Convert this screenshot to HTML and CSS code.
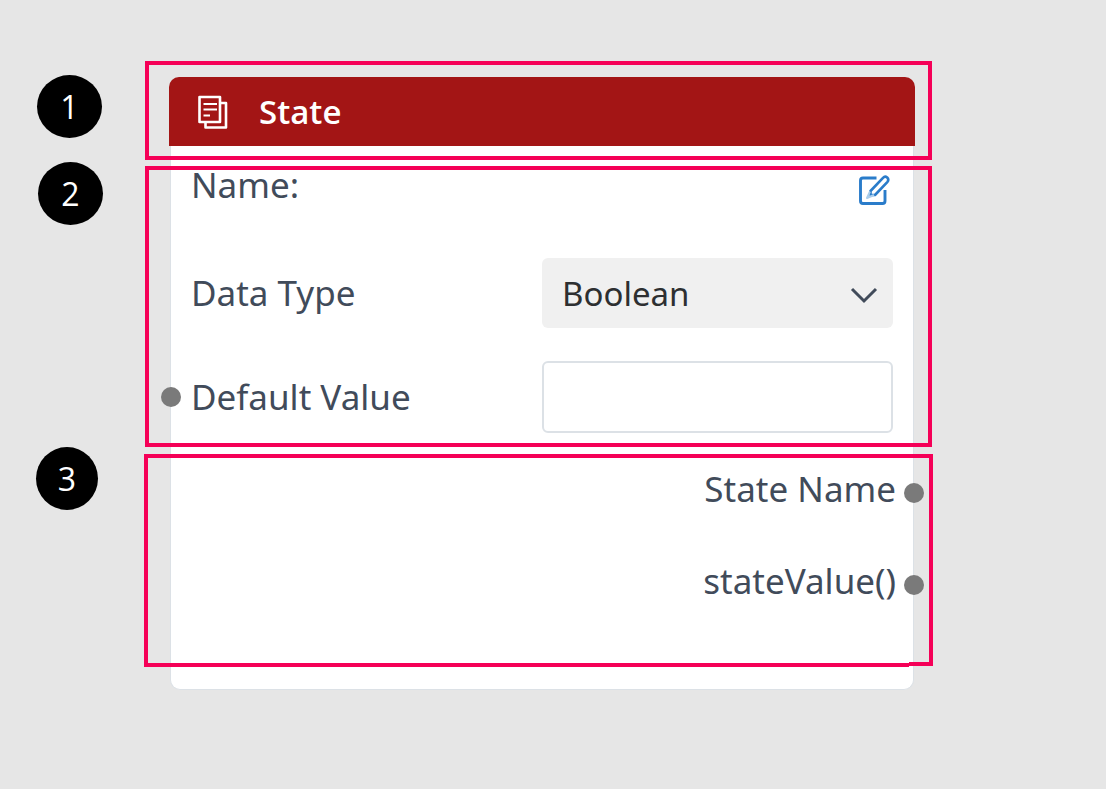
FILE: index.html
```html
<!DOCTYPE html>
<html lang="en">
<head>
<meta charset="utf-8">
<meta name="viewport" content="width=device-width, initial-scale=1">
<title>State node</title>
<link rel="stylesheet" href="styles.css">
</head>
<body>
<main class="stage">
  <article class="node">
    <header class="node-header">
      <svg class="node-icon" viewBox="0 0 32 36" fill="none" stroke="currentColor" stroke-width="2.600" stroke-linejoin="round" aria-hidden="true">
        <path d="M2.500 3H23V28H2.500zM23 9h6v24.500H8.500V28"/>
        <path d="M6.500 10H20M6.500 15.500H20M6.500 21.500H13" stroke-width="2"/>
      </svg>
      <h1 class="node-title">State</h1>
    </header>
    <div class="node-body">
      <div class="row row-name">
        <span class="label">Name:</span>
        <button class="edit" type="button" aria-label="Edit name">
          <svg class="edit-icon" viewBox="0 0 34 34" fill="none" stroke="currentColor" stroke-width="2.900" stroke-linejoin="round" aria-hidden="true">
            <path d="M20.500 5H7Q4.500 5 4.500 7.500V28Q4.500 30.500 7 30.500H26.500Q29 30.500 29 28V17"/>
            <path d="M14.500 18 27 4.800Q29 2.800 31.200 4.500Q33.200 6.500 31.500 8.800L19 22H14.500z" stroke-width="2.600"/>
            <path d="M14 18.500 11 25 18 22" stroke="#a9cdec" stroke-width="2"/>
          </svg>
        </button>
      </div>
      <div class="row">
        <label class="label" for="type">Data Type</label>
        <div class="select-wrap">
          <select class="field select" id="type"><option>Boolean</option></select>
          <svg class="chevron" viewBox="0 0 28 18" fill="none" stroke="currentColor" stroke-width="3" aria-hidden="true"><path d="M2 3 14 15 26 3"/></svg>
        </div>
      </div>
      <div class="row">
        <label class="label" for="value">Default Value</label>
        <input class="field input" id="value" type="text">
        <span class="port port-in"></span>
      </div>
      <div class="outputs">
        <div class="output"><span class="label">State Name</span><span class="port port-out"></span></div>
        <div class="output"><span class="label">stateValue()</span><span class="port port-out"></span></div>
      </div>
    </div>
  </article>
  <div class="frame frame-1"></div>
  <div class="frame frame-2"></div>
  <div class="frame frame-3"></div>
  <span class="badge badge-1">1</span>
  <span class="badge badge-2">2</span>
  <span class="badge badge-3">3</span>
</main>
</body>
</html>
```
FILE: styles.css
```css
* { box-sizing: border-box; }
body {
  margin: 0;
  min-height: 100vh;
  background: #e6e6e6;
  color: #414b5a;
  font-family: "Noto Sans", "Open Sans", sans-serif;
  font-size: 35px;
  line-height: 48px;
}
.stage { position: relative; padding: 77px 191px 99px 169px; }
.node-header {
  display: flex;
  align-items: center;
  gap: 30px;
  height: 69px;
  padding: 0 28px;
  border-radius: 10px 10px 0 0;
  background: #a31515;
  color: #fff;
}
.node-icon { width: 32px; height: 36px; }
.node-title { margin: 0; font-family: "Open Sans", sans-serif; font-size: 33px; font-weight: 600; }
.node-body {
  display: flex;
  flex-direction: column;
  gap: 33px;
  margin: 0 1px;
  padding: 15px 20px 73px;
  border: 1px solid #dce1e6;
  border-top: 0;
  border-radius: 0 0 10px 10px;
  background: #fff;
}
.row {
  position: relative;
  display: grid;
  grid-template-columns: 1fr 1fr;
  align-items: center;
  min-height: 70px;
}
.row-name { grid-template-columns: 1fr auto; align-items: start; min-height: 64px; }
.edit { display: flex; padding: 12px 3px 0 0; border: 0; background: none; color: #2a7cca; }
.edit-icon { width: 34px; height: 34px; }
.select-wrap { position: relative; display: grid; }
.field { width: 100%; height: 70px; border-radius: 6px; color: #2d2f31; font: inherit; font-size: 33px; }
.select { padding: 2px 20px 0; border: 0; background: #f0f0f0; appearance: none; }
.chevron {
  position: absolute;
  top: 28px;
  right: 15px;
  width: 28px;
  height: 18px;
  color: #414b5a;
  pointer-events: none;
}
.input { height: 72px; padding: 0 20px; border: 2px solid #dce1e6; background: #fff; }
.port {
  position: absolute;
  top: 50%;
  width: 20px;
  height: 20px;
  margin-top: -10px;
  border-radius: 50%;
  background: #7a7a7a;
}
.port-in { left: -30px; }
.port-out { right: -28px; margin-top: -6px; }
.outputs { display: grid; gap: 22px; margin: -12px -3px 0 0; }
.output { position: relative; display: flex; align-items: center; justify-content: flex-end; height: 70px; }
.frame { position: absolute; left: 145px; right: 174px; border: 4px solid #f50057; pointer-events: none; }
.frame-1 { top: 61px; height: 99px; }
.frame-2 { top: 166px; height: 281px; }
.frame-3 { top: 454px; left: 144px; right: 173px; height: 212px; border-bottom: 0; }
.frame-3::before, .frame-3::after { content: ""; position: absolute; height: 4px; background: #f50057; }
.frame-3::before { left: -4px; right: 20px; bottom: -1px; }
.frame-3::after { right: -4px; bottom: 0; width: 24px; }
.badge {
  position: absolute;
  display: grid;
  place-items: center;
  width: 65px;
  height: 63px;
  border-radius: 50%;
  background: #000;
  color: #fff;
  font-family: "Open Sans", sans-serif;
  font-size: 32px;
}
.badge-1 { top: 75px; left: 37px; }
.badge-2 { top: 162px; left: 38px; }
.badge-3 { top: 447px; left: 36px; width: 62px; }
```
